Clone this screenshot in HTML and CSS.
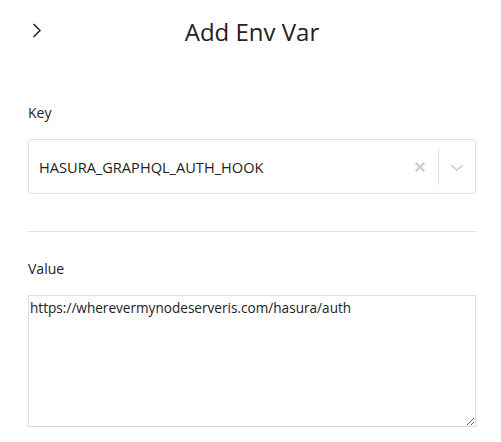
FILE: index.html
```html
<!DOCTYPE html>
<html>
<head>
<meta charset="utf-8">
<link rel="stylesheet" href="styles.css">
</head>
<body>
<div class="panel">
  <div class="header">
    <svg class="back" width="10" height="15" viewBox="0 0 10 15"><path d="M1.5 1 L8 7.5 L1.5 14" fill="none" stroke="#222" stroke-width="1.5"/></svg>
    <h1 class="title">Add Env Var</h1>
  </div>
  <div class="field">
    <label class="label">Key</label>
    <div class="select">
      <span class="select-value">HASURA_GRAPHQL_AUTH_HOOK</span>
      <span class="clear"><svg width="20" height="20" viewBox="0 0 20 20"><path d="M5.5 5.5 L14.5 14.5 M14.5 5.5 L5.5 14.5" stroke="#ccc" stroke-width="2.2"/></svg></span>
      <span class="sep"></span>
      <span class="drop"><svg width="20" height="20" viewBox="0 0 20 20"><path d="M4 8 L10 13 L16 8" fill="none" stroke="#ccc" stroke-width="1.6"/></svg></span>
    </div>
  </div>
  <hr class="rule">
  <div class="field field-value">
    <label class="label">Value</label>
    <textarea class="value">https://wherevermynodeserveris.com/hasura/auth</textarea>
  </div>
</div>
</body>
</html>
```
FILE: styles.css
```css
* { box-sizing: border-box; }
body { margin: 0; background: #fff; font-family: "Open Sans", sans-serif; color: #222; }
.panel { padding: 0 25px 0 28px; }
.header { position: relative; height: 60px; display: flex; align-items: center; justify-content: center; }
.back { position: absolute; left: 4px; top: 23px; }
.title { margin: 0; font-size: 24px; font-weight: 400; color: #222; font-family: "Open Sans", sans-serif; position: relative; top: 1px; }
.field { display: flex; flex-direction: column; }
.label { font-size: 14px; margin-top: 43px; line-height: 20px; }
.select { margin-top: 16px; height: 55px; border: 1px solid #e0e0e0; border-radius: 4px; display: flex; align-items: center; padding-left: 10px; }
.select-value { flex: 1; font-size: 14.6px; color: #222; }
.clear { width: 20px; height: 20px; margin-right: 8px; }
.sep { width: 1px; height: 36px; background: #ddd; }
.drop { width: 20px; height: 20px; margin: 0 8px; }
.rule { border: 0; border-top: 1px solid #e0e0e0; margin: 37px 0 0; }
.field-value .label { margin-top: 27px; }
.value { margin-top: 16px; height: 132px; width: 100%; border: 1px solid #ddd; font-family: "Open Sans", sans-serif; font-size: 13.6px; color: #222; padding: 2px 1px; resize: vertical; }
```
